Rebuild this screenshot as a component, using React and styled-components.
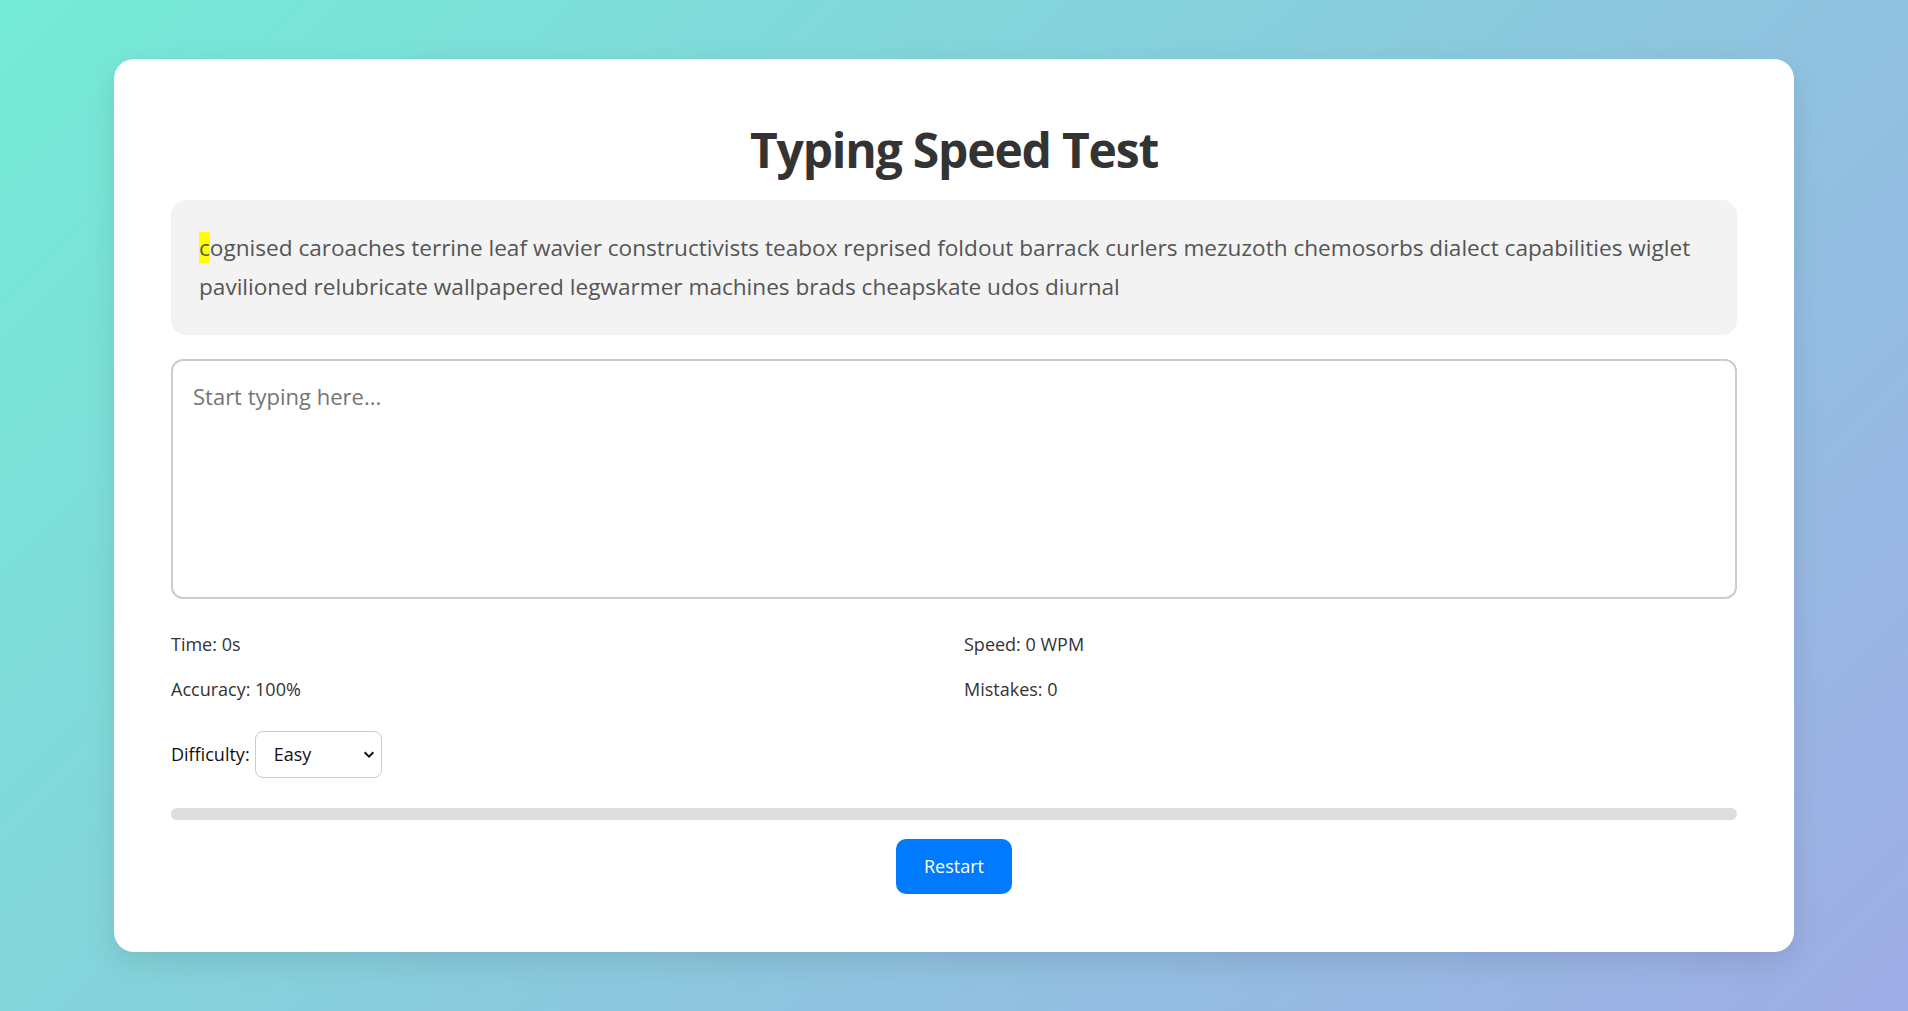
import React, { useState } from "react";
import styled, { createGlobalStyle } from "styled-components";

const GlobalStyle = createGlobalStyle`
  * {
    box-sizing: border-box;
  }

  body {
    margin: 0;
    font-family: "Open Sans", "Noto Sans", sans-serif;
    background: linear-gradient(135deg, #74ebd5 0%, #9face6 100%);
    min-height: 100vh;
  }
`;

const Page = styled.div`
  min-height: 100vh;
  display: flex;
  align-items: center;
  justify-content: center;
`;

const Card = styled.div`
  width: 1680px;
  background: #fff;
  border-radius: 20px;
  padding: 58px 57px;
  box-shadow: 0 10px 30px rgba(0, 0, 0, 0.1);
  display: flex;
  flex-direction: column;
`;

const Title = styled.h1`
  margin: 0 0 18px;
  text-align: center;
  font-size: 48px;
  font-weight: 700;
  color: #333;
  letter-spacing: -1.2px;
`;

const Passage = styled.div`
  background: #f3f3f3;
  border-radius: 15px;
  padding: 29px 28px;
  font-size: 22.6px;
  line-height: 38.4px;
  color: #555;
`;

const Char = styled.span`
  background: ${(props) => (props.current ? "#ffff00" : "transparent")};
`;

const TypingArea = styled.textarea`
  margin-top: 24px;
  width: 100%;
  height: 240px;
  padding: 20px;
  border: 2px solid #ccc;
  border-radius: 12px;
  font-family: inherit;
  font-size: 22px;
  color: #333;
  resize: none;
  outline: none;

  &::placeholder {
    color: #757575;
  }
`;

const Stats = styled.div`
  margin-top: 33px;
  display: grid;
  grid-template-columns: 1fr 1fr;
  gap: 20px;
  font-size: 18px;
  color: #333;
  line-height: 25px;
`;

const Controls = styled.div`
  margin-top: 29px;
  display: flex;
  align-items: center;
  gap: 5px;
  font-size: 18px;
  color: #111;
`;

const SelectWrap = styled.div`
  position: relative;
  width: 127px;
`;

const Select = styled.select`
  appearance: none;
  width: 100%;
  height: 47px;
  padding: 0 30px 0 18px;
  border: 1px solid #ccc;
  border-radius: 8px;
  background: #fff;
  font-family: inherit;
  font-size: 18px;
  color: #111;
`;

const Chevron = styled.svg`
  position: absolute;
  right: 6px;
  top: 50%;
  transform: translateY(-50%);
  pointer-events: none;
`;

const ProgressTrack = styled.div`
  margin-top: 30px;
  height: 12px;
  background: #ddd;
  border-radius: 6px;
  overflow: hidden;
`;

const ProgressFill = styled.div`
  height: 100%;
  background: #007bff;
`;

const RestartButton = styled.button`
  align-self: center;
  margin-top: 19px;
  width: 116px;
  height: 55px;
  border: none;
  border-radius: 10px;
  background: #007bff;
  color: #fff;
  font-family: inherit;
  font-size: 18px;
  cursor: pointer;
`;

const text =
  "cognised caroaches terrine leaf wavier constructivists teabox reprised foldout barrack curlers mezuzoth chemosorbs dialect capabilities wiglet pavilioned relubricate wallpapered legwarmer machines brads cheapskate udos diurnal";

export default function App() {
  const [difficulty, setDifficulty] = useState("easy");
  const progress = 0;

  return (
    <Page>
      <GlobalStyle />
      <Card>
        <Title>Typing Speed Test</Title>
        <Passage>
          <Char current>{text[0]}</Char>
          <Char>{text.slice(1)}</Char>
        </Passage>
        <TypingArea placeholder="Start typing here..." />
        <Stats>
          <div>Time: 0s</div>
          <div>Speed: 0 WPM</div>
          <div>Accuracy: 100%</div>
          <div>Mistakes: 0</div>
        </Stats>
        <Controls>
          <span>Difficulty:</span>
          <SelectWrap>
            <Select value={difficulty} onChange={(e) => setDifficulty(e.target.value)}>
              <option value="easy">Easy</option>
              <option value="medium">Medium</option>
              <option value="hard">Hard</option>
            </Select>
            <Chevron width="14" height="14" viewBox="0 0 16 16">
              <path d="M3 6 L8 11 L13 6" fill="none" stroke="#111" strokeWidth="2.2" />
            </Chevron>
          </SelectWrap>
        </Controls>
        <ProgressTrack>
          <ProgressFill style={{ width: `${progress}%` }} />
        </ProgressTrack>
        <RestartButton>Restart</RestartButton>
      </Card>
    </Page>
  );
}
